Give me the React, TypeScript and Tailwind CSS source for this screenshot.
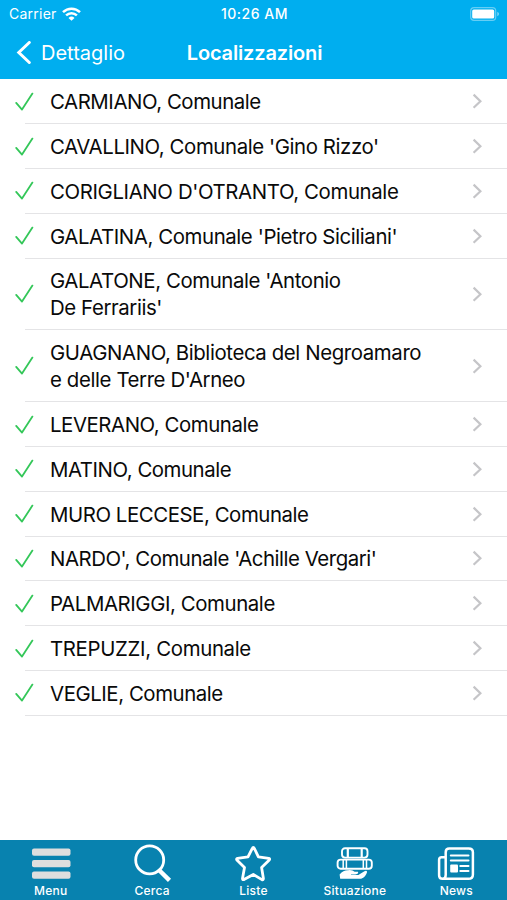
import { useState } from 'react'
import type { ReactNode } from 'react'
import { clsx } from 'clsx'

const libraries = [
  { lines: ['CARMIANO, Comunale'] },
  { lines: ["CAVALLINO, Comunale 'Gino Rizzo'"], tracking: 'tracking-[-0.41px]' },
  { lines: ["CORIGLIANO D'OTRANTO, Comunale"], tracking: 'tracking-[-0.38px]' },
  { lines: ["GALATINA, Comunale 'Pietro Siciliani'"], tracking: 'tracking-[-0.41px]' },
  { lines: ["GALATONE, Comunale 'Antonio", "De Ferrariis'"], tracking: 'tracking-[-0.41px]' },
  { lines: ['GUAGNANO, Biblioteca del Negroamaro', "e delle Terre D'Arneo"], tracking: 'tracking-[-0.39px]' },
  { lines: ['LEVERANO, Comunale'] },
  { lines: ['MATINO, Comunale'], tracking: 'tracking-[-0.46px]' },
  { lines: ['MURO LECCESE, Comunale'] },
  { lines: ["NARDO', Comunale 'Achille Vergari'"], tracking: 'tracking-[-0.46px]' },
  { lines: ['PALMARIGGI, Comunale'], tracking: 'tracking-[-0.41px]' },
  { lines: ['TREPUZZI, Comunale'], tracking: 'tracking-[-0.33px]' },
  { lines: ['VEGLIE, Comunale'] },
]

function WifiIcon() {
  return (
    <svg width="19" height="14" viewBox="0 0 19 14" fill="none" stroke="white" strokeWidth="2.5">
      <path d="M1 5.2C5.8.6 13.2.6 18 5.2" />
      <path d="M4.1 8.4C7.2 5.5 11.8 5.5 14.9 8.4" />
      <path d="M6.5 10.9Q9.5 8.3 12.5 10.9L9.5 13.8Z" fill="white" stroke="none" />
    </svg>
  )
}

function BatteryIcon() {
  return (
    <svg width="30" height="14" viewBox="0 0 30 14" fill="none">
      <rect x="0.7" y="0.7" width="25" height="12.6" rx="3.4" stroke="white" strokeOpacity="0.4" strokeWidth="1.2" />
      <rect x="2.2" y="2.5" width="22" height="9" rx="1.6" fill="white" />
      <path d="M27.3 4.8Q29 5.6 29 7T27.3 9.2Z" fill="white" fillOpacity="0.5" />
    </svg>
  )
}

function Check() {
  return (
    <svg width="20" height="20" viewBox="0 0 20 20" fill="none" stroke="#34c759" strokeWidth="1.8" strokeLinecap="round" strokeLinejoin="round">
      <path d="M1.2 10.9L7 17.6L17.4 1.6" />
    </svg>
  )
}

function Chevron() {
  return (
    <svg width="10" height="16" viewBox="0 0 10 16" fill="none" stroke="#c5c5c8" strokeWidth="2.2">
      <path d="M1.6 1.6L8.4 8.2L1.6 14.8" />
    </svg>
  )
}

function MenuIcon() {
  return (
    <svg width="40" height="40" viewBox="0 0 40 40" fill="#dedede">
      <rect x="1" y="4.5" width="38.5" height="7.2" rx="2" />
      <rect x="1" y="16" width="38.5" height="7.2" rx="2" />
      <rect x="1" y="27.5" width="38.5" height="7.2" rx="2" />
    </svg>
  )
}

function SearchIcon() {
  return (
    <svg width="40" height="40" viewBox="0 0 40 40" fill="none" stroke="white">
      <circle cx="17.7" cy="15.9" r="14" strokeWidth="2.8" />
      <path d="M26.2 25.3L37.5 36.4" strokeWidth="4.4" />
    </svg>
  )
}

function StarIcon() {
  return (
    <svg width="40" height="40" viewBox="0 0 40 40" fill="none" stroke="white" strokeWidth="2.8" strokeLinejoin="round">
      <path d="M20.3 3.4Q20.9 3.4 21.3 4.3L25.4 12.9L35.8 14.4Q37.2 14.8 36.3 16L28.6 23.5L30.4 34.4Q30.4 36.2 28.9 35.6L20.3 30.5L11 35.6Q9.4 36.1 9.5 34.4L11.5 23.5L3.9 16Q3.1 14.7 4.5 14.4L15 12.9L19.3 4.3Q19.7 3.4 20.3 3.4Z" />
    </svg>
  )
}

function BooksIcon() {
  return (
    <svg width="40" height="40" viewBox="0 0 40 40" fill="none" stroke="white" strokeWidth="1.9">
      <rect x="7" y="4.2" width="25.5" height="9.4" rx="3" />
      <path d="M12.8 4.2V13.6M26.7 4.2V13.6" strokeWidth="2.2" />
      <rect x="2.6" y="15.6" width="34.2" height="9.2" rx="3" />
      <path d="M8.2 15.6V24.8M11.4 15.6V24.8M28.3 15.6V24.8M31.5 15.6V24.8" strokeWidth="1.5" />
      <path d="M5.2 34.8L4.6 30.4Q8.5 26 13 26.2Q17.5 25.6 19.6 27.8H22.9Q24.1 30 20.3 30.4H16V31H23.4L29 27.4Q31.8 26 32.1 28Q30.8 33 26.1 34.8Z" fill="white" stroke="none" />
    </svg>
  )
}

function NewsIcon() {
  return (
    <svg width="40" height="40" viewBox="0 0 40 40" fill="none" stroke="white" strokeWidth="2.5">
      <path d="M9.3 13.2H5.7Q3.1 13.2 3.1 15.8V31.2Q3.1 34.8 6.5 34.8Q9.7 34.8 9.7 31V8.2Q9.7 4.5 13.3 4.5H32.7Q36.9 4.5 36.9 8.2V30.4Q36.9 34.8 32.5 34.8H6.5" />
      <path d="M14.8 11.6H32.5M14.8 16.6H32.5M24.3 22H32.5M24.3 27H32.5" strokeWidth="2" strokeLinecap="round" />
      <rect x="14.2" y="20.4" width="7.8" height="8" rx="1" fill="white" stroke="none" />
    </svg>
  )
}

const tabs: { label: string; icon: ReactNode }[] = [
  { label: 'Menu', icon: <MenuIcon /> },
  { label: 'Cerca', icon: <SearchIcon /> },
  { label: 'Liste', icon: <StarIcon /> },
  { label: 'Situazione', icon: <BooksIcon /> },
  { label: 'News', icon: <NewsIcon /> },
]

export default function App() {
  const [activeTab, setActiveTab] = useState('Cerca')

  return (
    <div className="flex h-[900px] w-[507px] flex-col overflow-hidden bg-white font-['Inter',sans-serif]">
      <header className="h-[79.4px] shrink-0 bg-[#00aeef] text-white">
        <div className="grid h-[27px] grid-cols-3 items-center pl-[9px] pr-[7px]">
          <div className="flex items-center gap-[5px] text-[14px] tracking-[0.25px]">
            Carrier
            <WifiIcon />
          </div>
          <span className="text-center text-[14px] font-medium tracking-[0.5px]">10:26 AM</span>
          <div className="flex justify-end">
            <BatteryIcon />
          </div>
        </div>
        <div className="grid h-[51px] grid-cols-3 items-center px-4">
          <button className="flex items-center gap-[9px] text-[20px]">
            <svg width="16" height="24" viewBox="0 0 16 24" fill="none" stroke="white" strokeWidth="3" strokeLinecap="round">
              <path d="M13.3 1.5L2.8 11.5L13.3 21.5" />
            </svg>
            Dettaglio
          </button>
          <h1 className="pl-0.5 text-center text-[20px] font-semibold tracking-[-0.15px]">Localizzazioni</h1>
        </div>
      </header>

      <ul className="flex-1">
        {libraries.map(({ lines, tracking = 'tracking-[-0.44px]' }) => (
          <li
            key={lines[0]}
            className={clsx('flex pl-[15px]', lines.length > 1 ? 'h-[71.8px]' : 'h-[44.8px]')}
          >
            <div className="flex w-[35px] items-center">
              <Check />
            </div>
            <div className="-ml-[25px] flex flex-1 items-center border-b border-[#e4e4e6] pl-[25px] pr-[25px]">
              <div className={clsx('flex-1 whitespace-nowrap pt-px text-[20.4px] leading-[27px] text-[#0a0a0a]', tracking)}>
                {lines.map((line) => (
                  <p key={line}>{line}</p>
                ))}
              </div>
              <Chevron />
            </div>
          </li>
        ))}
      </ul>

      <nav className="grid h-[60px] shrink-0 grid-cols-5 bg-[#0882af] text-white">
        {tabs.map(({ label, icon }) => (
          <button
            key={label}
            onClick={() => setActiveTab(label)}
            aria-current={activeTab === label ? 'page' : undefined}
            className="flex flex-col items-center pt-[4px]"
          >
            {icon}
            <span className="text-[12px] font-medium leading-[14px] tracking-[0.25px]">{label}</span>
          </button>
        ))}
      </nav>
    </div>
  )
}
